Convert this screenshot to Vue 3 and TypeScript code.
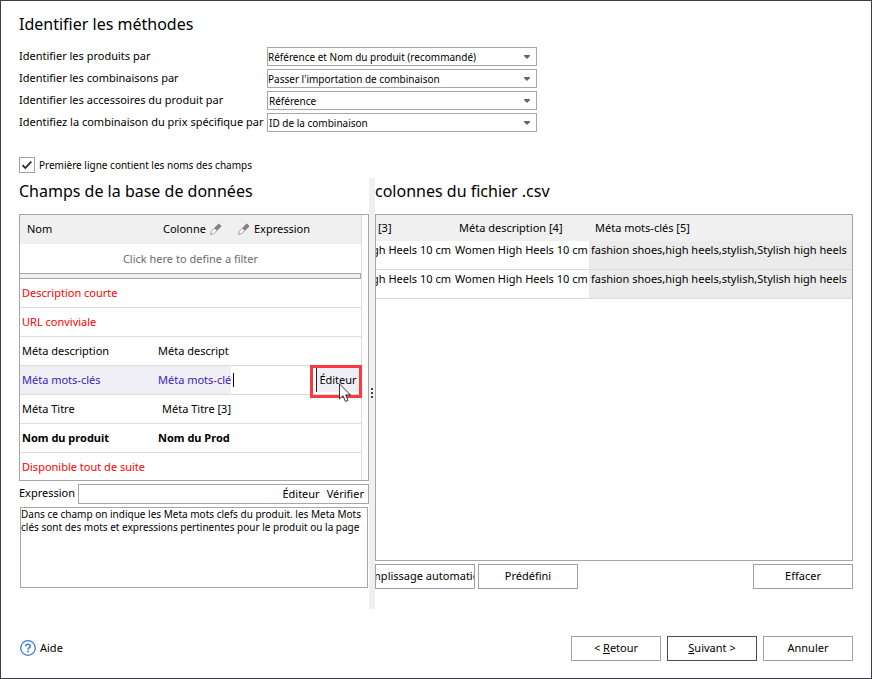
<script setup lang="ts">
import { ref } from 'vue'

interface Method {
  id: string
  label: string
  value: string
  inset?: boolean
}

interface Field {
  name: string
  column?: string
  kind?: 'missing' | 'required' | 'active'
  inset?: boolean
}

const methods: Method[] = [
  { id: 'products', label: 'Identifier les produits par', value: 'Référence et Nom du produit (recommandé)' },
  { id: 'combinations', label: 'Identifier les combinaisons par', value: "Passer l'importation de combinaison" },
  { id: 'accessories', label: 'Identifier les accessoires du produit par', value: 'Référence', inset: true },
  { id: 'prices', label: 'Identifiez la combinaison du prix spécifique par', value: 'ID de la combinaison', inset: true },
]

const fields: Field[] = [
  { name: 'Description courte', kind: 'missing' },
  { name: 'URL conviviale', kind: 'missing' },
  { name: 'Méta description', column: 'Méta descript' },
  { name: 'Méta mots-clés', column: 'Méta mots-clé', kind: 'active' },
  { name: 'Méta Titre', column: 'Méta Titre [3]', inset: true },
  { name: 'Nom du produit', column: 'Nom du Prod', kind: 'required' },
  { name: 'Disponible tout de suite', kind: 'missing' },
]

const csvRows = [1, 2].map(() => ({
  title: 'Women High Heels 10 cm',
  description: 'Women High Heels 10 cm',
  keywords: 'fashion shoes,high heels,stylish,Stylish high heels',
}))

const firstLine = ref(true)
const expression = ref('')
const rowExpression = ref('')
const hint = ref(
  'Dans ce champ on indique les Meta mots clefs du produit. les Meta Mots\nclés sont des mots et expressions pertinentes pour le produit ou la page',
)
</script>

<template>
  <main class="window">
    <h1>Identifier les méthodes</h1>
    <div class="methods">
      <template v-for="m in methods" :key="m.id">
        <label :for="m.id">{{ m.label }}</label>
        <div class="combo">
          <select :id="m.id" :class="{ inset: m.inset }">
            <option>{{ m.value }}</option>
          </select>
          <svg class="arrow" viewBox="0 0 6 4" width="6" height="4"><path d="M0 0h6v1L3 4 0 1z" fill="#666" /></svg>
        </div>
      </template>
    </div>

    <label class="check">
      <span class="box">
        <input v-model="firstLine" type="checkbox" />
        <svg v-if="firstLine" viewBox="0 0 16 16" width="16" height="16">
          <path d="M3.5 8.2 6.3 11l6-6.3" fill="none" stroke="#222" stroke-width="1.7" />
        </svg>
      </span>
      <span>Première ligne contient les noms des champs</span>
    </label>

    <div class="panes">
      <section class="pane">
        <h2>Champs de la base de données</h2>
        <div class="frame">
          <table class="fields">
            <colgroup>
              <col class="c-name" />
              <col class="c-column" />
              <col class="c-expr" />
            </colgroup>
            <thead>
              <tr class="head">
                <th>Nom</th>
                <th>
                  <span class="with-icon">Colonne
                    <svg viewBox="0 0 12 12" width="12" height="12">
                      <path d="M8.8.9 11.1 3.2 6.8 7.6 4.4 5.2z" fill="#808080" stroke="#808080" stroke-linejoin="round" />
                      <path d="M4.2 5.4 1.2 8.4.6 11.4l3-.6 3-3" fill="#fff" stroke="#999" />
                    </svg>
                  </span>
                </th>
                <th>
                  <span class="with-icon">
                    <svg viewBox="0 0 12 12" width="12" height="12">
                      <path d="M8.8.9 11.1 3.2 6.8 7.6 4.4 5.2z" fill="#808080" stroke="#808080" stroke-linejoin="round" />
                      <path d="M4.2 5.4 1.2 8.4.6 11.4l3-.6 3-3" fill="#fff" stroke="#999" />
                    </svg>
                    Expression
                  </span>
                </th>
              </tr>
              <tr class="filter">
                <td colspan="3">Click here to define a filter</td>
              </tr>
              <tr class="divider">
                <td colspan="3"></td>
              </tr>
            </thead>
            <tbody>
              <tr v-for="f in fields" :key="f.name" :class="f.kind">
                <td>{{ f.name }}</td>
                <td :class="{ inset: f.inset }">{{ f.column }}</td>
                <td class="expr">
                  <div v-if="f.kind === 'active'" class="editor">
                    <span class="caret"></span>
                    <input v-model="rowExpression" type="text" aria-label="Expression" />
                    <button type="button">Éditeur</button>
                    <span class="highlight"></span>
                    <svg class="pointer" viewBox="0 0 14 20" width="14" height="20">
                      <path d="M1.5 1v15l3.5-3.3 2.4 5.8 2.6-1.2-2.3-5.4h4.8z" fill="#fff" stroke="#333" />
                    </svg>
                  </div>
                </td>
              </tr>
            </tbody>
          </table>
        </div>
        <div class="expression">
          <label for="expression">Expression</label>
          <div class="expression-box">
            <input id="expression" v-model="expression" type="text" />
            <button type="button">Éditeur</button>
            <button type="button">Vérifier</button>
          </div>
        </div>
        <textarea v-model="hint" class="hint" aria-label="Description" wrap="off"></textarea>
      </section>

      <div class="splitter" role="separator"><i></i><i></i><i></i></div>

      <section class="pane">
        <h2>colonnes du fichier .csv</h2>
        <div class="frame grow">
          <table class="csv">
            <colgroup>
              <col class="k-title" />
              <col class="k-description" />
              <col class="k-keywords" />
            </colgroup>
            <thead>
              <tr>
                <th>[3]</th>
                <th>Méta description [4]</th>
                <th>Méta mots-clés [5]</th>
              </tr>
            </thead>
            <tbody>
              <tr v-for="(r, i) in csvRows" :key="i">
                <td><div class="scrolled">{{ r.title }}</div></td>
                <td>{{ r.description }}</td>
                <td class="selected">{{ r.keywords }}</td>
              </tr>
            </tbody>
          </table>
        </div>
        <div class="actions">
          <button type="button" class="btn"><span>Remplissage automatique</span></button>
          <button type="button" class="btn">Prédéfini</button>
          <button type="button" class="btn last">Effacer</button>
        </div>
      </section>
    </div>

    <footer>
      <a href="#" class="help">
        <svg viewBox="0 0 16 16" width="16" height="16" fill="none" stroke="#3a7de0">
          <circle cx="8" cy="8" r="7.3" stroke-width="1.3" />
          <path d="M5.8 6.3c0-1.3 1-2.1 2.2-2.1s2.2.8 2.2 2c0 1.7-2.1 1.6-2.1 3.2" stroke-width="1.6" />
          <path d="M8.1 10.6v1.6" stroke-width="1.7" />
        </svg>
        <span>Aide</span>
      </a>
      <button type="button" class="btn">&lt; <u>R</u>etour</button>
      <button type="button" class="btn primary"><u>S</u>uivant &gt;</button>
      <button type="button" class="btn">Annuler</button>
    </footer>
  </main>
</template>

<style>
body {
  margin: 0;
  background: #fff;
}
</style>

<style scoped>
* {
  box-sizing: border-box;
}

.window {
  display: flex;
  flex-direction: column;
  min-height: 100vh;
  padding: 11px 18px 17px;
  border: 1px solid #3e3e42;
  color: #000;
  font: 11px/16px 'Noto Sans', 'Open Sans', sans-serif;
}

input,
select,
button,
textarea {
  margin: 0;
  padding: 0;
  border: 0;
  border-radius: 0;
  outline: 0;
  background: transparent;
  color: inherit;
  font: inherit;
}

.combo select,
.check,
.hint {
  font-size: 10px;
}

h1,
h2 {
  margin: 0;
  font-size: 16px;
  font-weight: 400;
  line-height: 24px;
  white-space: nowrap;
}

.methods {
  display: grid;
  grid-template-columns: 248px 270px;
  row-gap: 3px;
  margin-top: 11px;
  align-items: center;
  white-space: nowrap;
}

.methods label {
  padding-bottom: 1px;
}

.combo {
  display: flex;
  align-items: center;
  height: 19px;
  border: 1px solid #a6a6a6;
}

.combo select {
  flex: 1;
  height: 17px;
  appearance: none;
}

.combo select.inset {
  padding-left: 1px;
}

.arrow {
  margin: 0 6px;
}

.check {
  display: flex;
  align-items: center;
  gap: 4px;
  margin-top: 25px;
}

.box {
  display: grid;
  width: 16px;
  height: 16px;
}

.box > * {
  grid-area: 1 / 1;
}

.box svg {
  pointer-events: none;
}

.check input {
  width: 16px;
  height: 16px;
  border: 1px solid #a0a0a0;
  appearance: none;
}

.panes {
  display: grid;
  grid-template-columns: minmax(0, 350fr) 6px minmax(0, 478fr);
  flex: 1;
  margin-top: 5px;
}

.pane {
  display: flex;
  flex-direction: column;
  padding: 1px 0 20px;
}

.frame {
  margin-top: 11px;
  border: 1px solid #a6a6a6;
}

.frame.grow {
  flex: 1;
}

table {
  width: 100%;
  border-spacing: 0;
  table-layout: fixed;
}

th,
td {
  padding: 0;
  overflow: hidden;
  font-weight: 400;
  text-align: left;
  white-space: nowrap;
}

.fields {
  width: calc(100% - 6px);
  border-right: 1px solid #dcdcdc;
}

.c-name {
  width: 136px;
}

.c-column {
  width: 75px;
}

.fields .head th {
  height: 29px;
  padding: 0 0 1px 7px;
  background: #f0f0f0;
}

.with-icon {
  display: flex;
  align-items: center;
  gap: 4px;
}

.fields .filter td {
  height: 29px;
  color: #6b6b6b;
  text-align: center;
}

.fields .divider td {
  height: 6px;
  border: 1px solid #a6a6a6;
  border-left: 0;
  background: #f0f0f0;
}

.fields tbody td {
  height: 29px;
  padding-left: 2px;
  border-bottom: 1px solid #dcdcdc;
}

.fields tbody tr:last-child td {
  height: 27px;
  border-bottom: 0;
}

.fields tbody td.inset {
  padding-left: 6px;
}

.missing {
  color: #f00;
}

.required td {
  font-weight: 700;
}

.active {
  color: #3d22b5;
}

.active td {
  background: #f0eff5;
}

.fields tbody td.expr {
  padding: 0;
  overflow: visible;
  background: #fff;
}

.editor {
  display: flex;
  position: relative;
  align-items: center;
  height: 28px;
}

.caret {
  width: 1px;
  height: 14px;
  margin-left: 2px;
  background: #000;
}

.editor input {
  flex: 1;
  min-width: 0;
}

.editor button {
  width: 45px;
  height: 24px;
  padding-right: 2px;
  border-left: 1px solid #222;
  background: #f0eff5;
  color: #000;
}

.highlight {
  position: absolute;
  top: -1px;
  right: -1px;
  width: 52px;
  height: 33px;
  border: 3px solid #f93a3e;
}

.pointer {
  position: absolute;
  top: 17px;
  right: 9px;
}

.expression {
  display: flex;
  align-items: center;
  margin-top: 3px;
}

.expression label {
  width: 59px;
  padding-bottom: 2px;
}

.expression-box {
  display: flex;
  flex: 1;
  gap: 7px;
  height: 20px;
  padding-right: 4px;
  border: 1px solid #a6a6a6;
}

.expression-box input {
  flex: 1;
  min-width: 0;
}

.hint {
  height: 81px;
  margin: 3px 1px 0;
  border: 1px solid #a6a6a6;
  overflow: hidden;
  line-height: 13px;
  resize: none;
  white-space: pre;
}

.splitter {
  display: flex;
  flex-direction: column;
  align-items: center;
  justify-content: center;
  gap: 2px;
  padding-bottom: 2px;
  background: #f0f0f0;
}

.splitter i {
  width: 2px;
  height: 2px;
  background: #444;
}

.k-title {
  width: 77px;
}

.k-description {
  width: 136px;
}

.csv th {
  height: 26px;
  padding-left: 6px;
  background: #f0f0f0;
}

.csv th:first-child {
  padding-left: 2px;
}

.csv td {
  height: 29px;
  padding: 1px 2px 0;
  border-bottom: 1px solid #dcdcdc;
  vertical-align: top;
}

.csv td.selected {
  background: #ebebeb;
}

.scrolled {
  display: flex;
  justify-content: flex-end;
}

.btn {
  height: 25px;
  padding-bottom: 1px;
  border: 1px solid #a0a0a0;
  background: #fff;
}

.actions {
  display: flex;
  gap: 3px;
  margin-top: 3px;
}

.actions .btn {
  display: flex;
  align-items: center;
  justify-content: center;
  width: 100px;
  overflow: hidden;
  white-space: nowrap;
}

.actions .last {
  margin-left: auto;
}

footer {
  display: flex;
  align-items: center;
  gap: 6px;
  margin-top: 27px;
}

footer .btn {
  width: 90px;
}

footer .primary {
  border-color: #4a4a5e;
}

.help {
  display: flex;
  align-items: center;
  gap: 4px;
  margin: 0 auto 0 1px;
  padding-bottom: 1px;
  color: inherit;
  text-decoration: none;
}
</style>
